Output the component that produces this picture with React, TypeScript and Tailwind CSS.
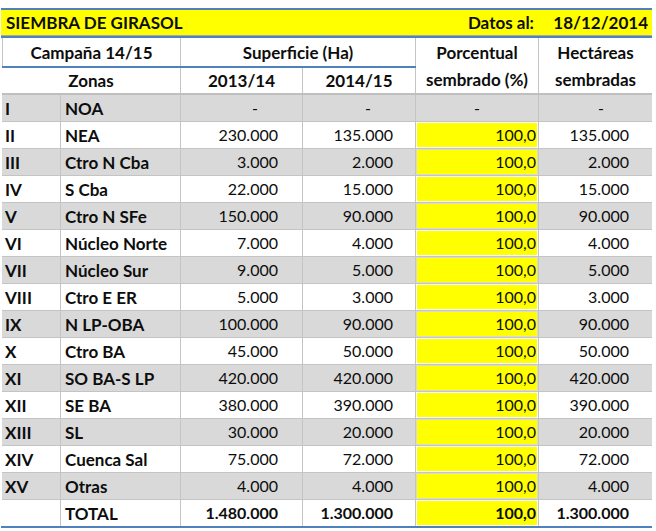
import React from 'react';

type Row = [string, string, string, string, string, string];

const rows: Row[] = [
  ['I', 'NOA', '-', '-', '-', '-'],
  ['II', 'NEA', '230.000', '135.000', '100,0', '135.000'],
  ['III', 'Ctro N Cba', '3.000', '2.000', '100,0', '2.000'],
  ['IV', 'S Cba', '22.000', '15.000', '100,0', '15.000'],
  ['V', 'Ctro N SFe', '150.000', '90.000', '100,0', '90.000'],
  ['VI', 'Núcleo Norte', '7.000', '4.000', '100,0', '4.000'],
  ['VII', 'Núcleo Sur', '9.000', '5.000', '100,0', '5.000'],
  ['VIII', 'Ctro E ER', '5.000', '3.000', '100,0', '3.000'],
  ['IX', 'N LP-OBA', '100.000', '90.000', '100,0', '90.000'],
  ['X', 'Ctro BA', '45.000', '50.000', '100,0', '50.000'],
  ['XI', 'SO BA-S LP', '420.000', '420.000', '100,0', '420.000'],
  ['XII', 'SE BA', '380.000', '390.000', '100,0', '390.000'],
  ['XIII', 'SL', '30.000', '20.000', '100,0', '20.000'],
  ['XIV', 'Cuenca Sal', '75.000', '72.000', '100,0', '72.000'],
  ['XV', 'Otras', '4.000', '4.000', '100,0', '4.000'],
];

const cols = 'grid grid-cols-[59px_120px_122px_113px_123px_113px]';

function DataRow({ row, gray }: { row: Row; gray: boolean }) {
  const dash = row[2] === '-';
  const bg = gray ? 'bg-[#d9d9d9]' : 'bg-white';
  return (
    <div className={`${cols} h-[27px] border-b border-[#c4c4c4] ${bg}`}>
      <div className="flex items-center pl-[3px] font-bold border-r border-[#c4c4c4]">{row[0]}</div>
      <div className="flex items-center pl-[4px] font-bold border-r border-[#c4c4c4]">{row[1]}</div>
      <div className={`flex items-center justify-end text-[16px] border-r border-[#c4c4c4] ${dash ? 'pr-[44px]' : 'pr-[24px]'}`}>{row[2]}</div>
      <div className={`flex items-center justify-end text-[16px] border-r border-[#c4c4c4] ${dash ? 'pr-[44px]' : 'pr-[22px]'}`}>{row[3]}</div>
      <div className="flex text-[16px] border-r border-[#c4c4c4] p-px">
        {dash ? (
          <div className="flex-1 flex items-center justify-center">-</div>
        ) : (
          <div className="flex-1 flex items-center justify-end pr-[1px] bg-[#ffff00]">{row[4]}</div>
        )}
      </div>
      <div className={`flex items-center justify-end text-[16px] ${dash ? 'pr-[48px]' : 'pr-[23px]'}`}>{row[5]}</div>
    </div>
  );
}

export default function App() {
  return (
    <div className="pt-2 pl-px text-[17px] leading-none text-[#0d0d0d] bg-white" style={{ fontFamily: 'Lato, "Open Sans", sans-serif' }}>
      <div className="w-[651px]">
        <div className="border-t-2 border-[#4f81bd]" />
        <div className="flex h-[25px] items-center bg-[#ffff00] font-bold">
          <div className="flex-1 pl-[5px]">SIEMBRA DE GIRASOL</div>
          <div className="w-[119px] text-right pr-[5px]">Datos al:</div>
          <div className="w-[113px] text-right pr-[4px]">18/12/2014</div>
        </div>
        <div className="border-t border-[#a6a6a6]" />
        <div className="border-t-2 border-[#4f81bd]" />

        <div className="pl-px">
          <div className={`${cols} grid-rows-[28px_2px_25px] font-bold border-b-2 border-[#bfbfbf]`}>
            <div className="col-span-2 flex items-center justify-center border-r border-[#c4c4c4] border-l border-l-[#c4c4c4]">Campaña 14/15</div>
            <div className="col-span-2 flex items-center justify-center border-r border-[#c4c4c4]">Superficie (Ha)</div>
            <div className="row-span-3 flex flex-col border-r border-[#c4c4c4]">
              <div className="h-[28px] flex items-center justify-center">Porcentual</div>
              <div className="h-[27px] flex items-center justify-center">sembrado (%)</div>
            </div>
            <div className="row-span-3 flex flex-col">
              <div className="h-[28px] flex items-center justify-center">Hectáreas</div>
              <div className="h-[27px] flex items-center justify-center">sembradas</div>
            </div>
            <div className="col-span-4 bg-[#4f81bd]" />
            <div className="col-span-2 flex items-center justify-center border-r border-[#c4c4c4]">Zonas</div>
            <div className="flex items-center justify-center border-r border-[#c4c4c4]">2013/14</div>
            <div className="flex items-center justify-center border-r border-[#c4c4c4]">2014/15</div>
          </div>

          {rows.map((r, i) => (
            <DataRow key={r[0]} row={r} gray={i % 2 === 0} />
          ))}

          <div className={`${cols} h-[26px] font-bold bg-white`}>
            <div className="border-r border-[#c4c4c4]" />
            <div className="flex items-center pl-[4px] border-r border-[#c4c4c4]">TOTAL</div>
            <div className="flex items-center justify-end text-[16px] pr-[24px] border-r border-[#c4c4c4]">1.480.000</div>
            <div className="flex items-center justify-end text-[16px] pr-[22px] border-r border-[#c4c4c4]">1.300.000</div>
            <div className="flex text-[16px] border-r border-[#c4c4c4] p-px">
              <div className="flex-1 flex items-center justify-end pr-[1px] bg-[#ffff00]">100,0</div>
            </div>
            <div className="flex items-center justify-end text-[16px] pr-[23px]">1.300.000</div>
          </div>
        </div>
        <div className="border-t-2 border-[#4f81bd]" />
      </div>
    </div>
  );
}
